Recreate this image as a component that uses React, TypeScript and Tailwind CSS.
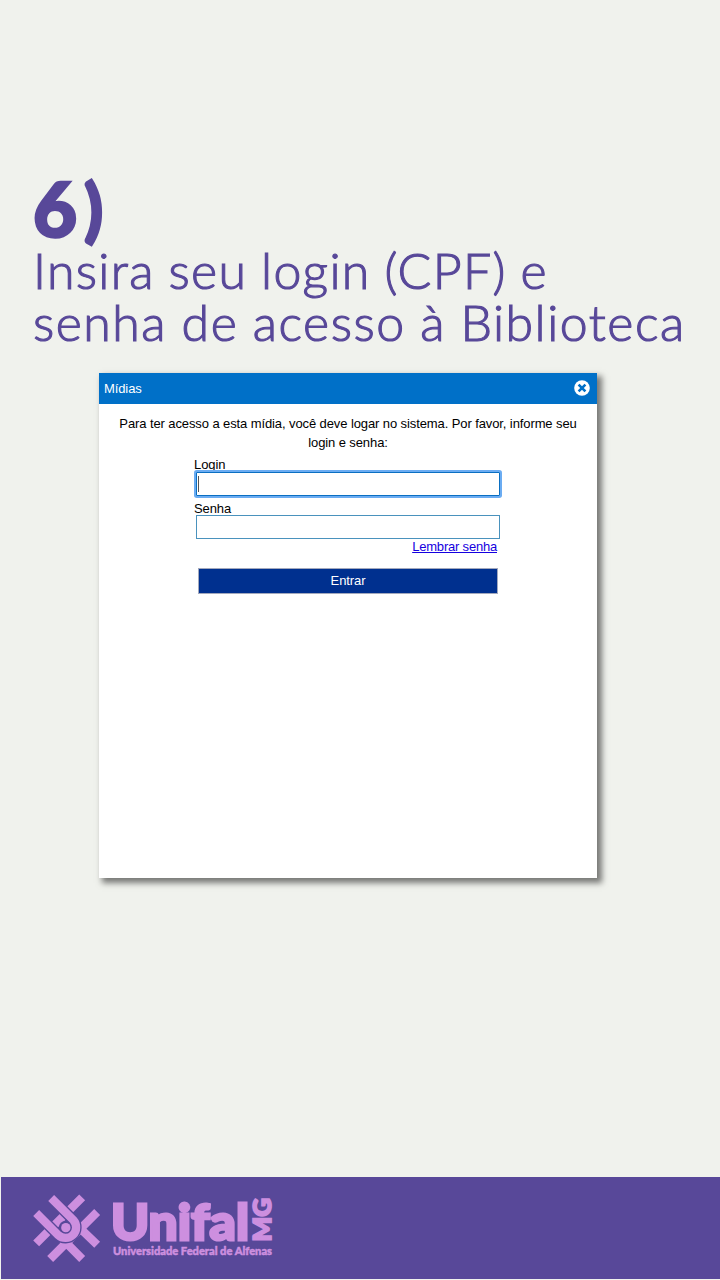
import { useState } from "react";

function CloseIcon() {
	return (
		<svg viewBox="0 0 16 16" className="w-4 h-4 block">
			<circle cx="8" cy="8" r="7.8" fill="#fff" />
			<path d="M4.600 4.600L11.400 11.400M11.400 4.600L4.600 11.400" stroke="#0070c8" strokeWidth="2.600" />
		</svg>
	);
}

function UnifalLogo() {
	return (
		<svg viewBox="0 0 244 72" className="w-[244px] h-[72px] block overflow-visible" fill="#cd8fdf">
			{/* woven symbol */}
			<g transform="translate(-0.500 0) scale(0.3333)" fill="none" stroke="#cd8fdf" strokeWidth="25">
				<path d="M11 145L149 7M53 192L194 51" />
				<path d="M120 78L194 149M78 120L149 192" />
				<path d="M56 9L122.600 75.400A32 32 0 0 1 77.400 120.600L11 54" stroke="#584899" strokeWidth="33" />
				<circle cx="100" cy="98" r="21" fill="#584899" stroke="none" />
				<path d="M56 9L122.600 75.400A32 32 0 0 1 77.400 120.600L11 54" />
				<circle cx="100" cy="98" r="14" fill="#cd8fdf" stroke="none" />
			</g>
			<text x="78" y="45" fontFamily="Lato" fontWeight="900" fontSize="50" textLength="138" lengthAdjust="spacingAndGlyphs" stroke="#cd8fdf" strokeWidth="2.800">Unifal</text>
			<text transform="translate(238 46.500) rotate(-90)" fontFamily="Lato" fontWeight="900" fontSize="25" textLength="43.500" lengthAdjust="spacingAndGlyphs" stroke="#cd8fdf" strokeWidth="1.800">MG</text>
			<text x="80" y="59.500" fontFamily="Lato" fontWeight="900" fontSize="12" textLength="159" lengthAdjust="spacingAndGlyphs" stroke="#cd8fdf" strokeWidth="0.500">Universidade Federal de Alfenas</text>
		</svg>
	);
}

export default function App() {
	const [login, setLogin] = useState("");
	const [senha, setSenha] = useState("");

	return (
		<main className="flex flex-col w-[720px] h-[1280px] overflow-hidden bg-[#f0f2ed]">
			<h1 className="pt-[168px] pl-[33px] h-[373px] shrink-0 font-[Lato,sans-serif] text-[#584899] whitespace-nowrap">
				<span className="flex h-[76px] text-[76px] leading-[80px] font-black [-webkit-text-stroke:2.5px_#584899]">
					<span>6</span>
					<span className="ml-[7px] text-[69px] leading-[80px]">)</span>
				</span>
				<span className="block text-[50px] leading-[52px] font-light tracking-[1.3px] [word-spacing:-1px] [-webkit-text-stroke:1.1px_#584899]">Insira seu login (CPF) e</span>
				<span className="block text-[50px] leading-[52px] font-light tracking-[1.5px] [word-spacing:-0.5px] [-webkit-text-stroke:1.1px_#584899]">senha de acesso à Biblioteca</span>
			</h1>

			<section className="ml-[99px] w-[498px] h-[505px] shrink-0 bg-white font-['Liberation_Sans',sans-serif] text-[13px] text-black tracking-[-0.1px] shadow-[4px_4px_6px_1px_rgba(0,0,0,0.5)]">
				<header className="flex items-center justify-between h-[31px] pl-[5px] pr-[7px] bg-[#0070c8] text-white">
					<span className="text-[13px]">Mídias</span>
					<button type="button" aria-label="Fechar" className="pb-px"><CloseIcon /></button>
				</header>

				<p className="pt-[10px] px-4 text-center leading-[19px]">
					Para ter acesso a esta mídia, você deve logar no sistema. Por favor, informe seu login e senha:
				</p>

				<form className="flex flex-col ml-[95px] w-[306px] pt-[4px]">
					<label className="h-[17px] leading-[17px]" htmlFor="login">Login</label>
					<div className="flex items-center ml-[2px] mt-[-1px] w-[304px] h-[24px] border border-[#0a6fc2] bg-white rounded-[1px] shadow-[0_0_0_2px_#6bacf2]">
						<span className="ml-px w-px h-[16px] bg-[#555]"></span>
						<input id="login" className="w-full h-full outline-none" value={login} onChange={(e) => setLogin(e.target.value)} />
					</div>
					<label className="mt-[4px] h-[15px] leading-[17px]" htmlFor="senha">Senha</label>
					<input id="senha" type="password" className="ml-[2px] w-[304px] h-[24px] border border-[#4a92bd] outline-none" value={senha} onChange={(e) => setSenha(e.target.value)} />
					<a href="#" className="self-end mr-[3px] h-[16px] leading-[16px] text-[#1500e0] tracking-[-0.2px] underline">Lembrar senha</a>
					<button type="button" className="mt-[13px] ml-[4px] w-[300px] h-[26px] border border-[#a3a9bd] bg-[#00308f] text-white">Entrar</button>
				</form>
			</section>

			<footer className="mt-auto mb-px ml-px h-[102px] shrink-0 bg-[#584899] pl-[32px] pt-[18px]">
				<UnifalLogo />
			</footer>
		</main>
	);
}
